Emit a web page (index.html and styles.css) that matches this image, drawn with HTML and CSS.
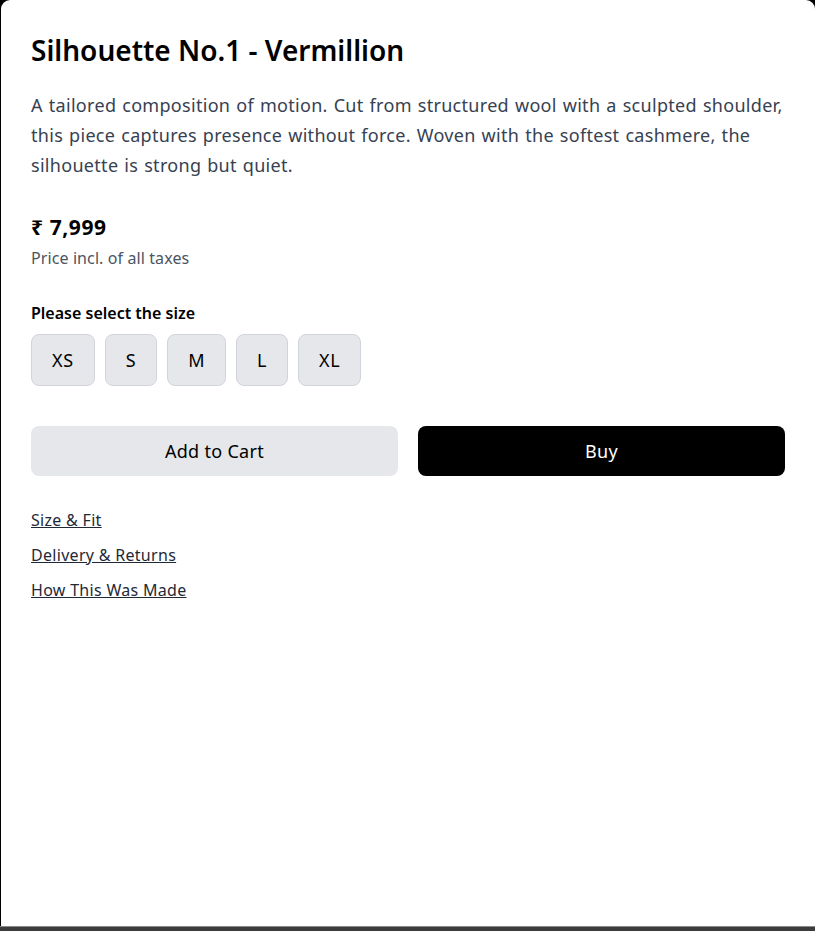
FILE: index.html
```html
<!DOCTYPE html>
<html lang="en">
<head>
<meta charset="utf-8">
<title>Silhouette No.1 - Vermillion</title>
<link rel="stylesheet" href="styles.css">
</head>
<body>
<div class="screen">
  <main class="panel">
    <h1 class="title">Silhouette No.1 - Vermillion</h1>
    <p class="desc">A tailored composition of motion. Cut from structured wool with a sculpted shoulder, this piece captures presence without force. Woven with the softest cashmere, the silhouette is strong but quiet.</p>
    <div class="price">₹ 7,999</div>
    <div class="tax">Price incl. of all taxes</div>
    <div class="size-label">Please select the size</div>
    <div class="sizes">
      <button class="size">XS</button>
      <button class="size">S</button>
      <button class="size">M</button>
      <button class="size">L</button>
      <button class="size">XL</button>
    </div>
    <div class="actions">
      <button class="btn btn-cart">Add to Cart</button>
      <button class="btn btn-buy">Buy</button>
    </div>
    <nav class="links">
      <a href="#" class="link">Size &amp; Fit</a>
      <a href="#" class="link">Delivery &amp; Returns</a>
      <a href="#" class="link">How This Was Made</a>
    </nav>
  </main>
  <div class="bottom-bar"></div>
</div>
</body>
</html>
```
FILE: styles.css
```css
* { box-sizing: border-box; }
html, body { margin: 0; padding: 0; height: 100%; }
body {
  background: #000;
  font-family: "Noto Sans", "Open Sans", sans-serif;
  color: #000;
}
.screen {
  height: 931px;
  display: flex;
  flex-direction: column;
}
.panel {
  flex: 1;
  margin-left: 1px;
  background: #fff;
  border-radius: 9px 9px 0 0;
  padding: 30px 30px 0 30px;
}
.bottom-bar {
  height: 5px;
  background: #3c3c3c;
  border-top: 1px solid #8a8a8a;
}
.title {
  margin: 0;
  font-size: 28px;
  line-height: 40px;
  font-weight: 600;
}
.desc {
  margin: 20px 0 0;
  font-size: 18px;
  line-height: 30px;
  letter-spacing: 0.3px;
  word-spacing: 1px;
  color: #374151;
}
.price {
  margin-top: 33px;
  font-size: 21px;
  line-height: 28px;
  font-weight: 700;
  letter-spacing: 0.6px;
}
.tax {
  margin-top: 5px;
  font-size: 16px;
  line-height: 24px;
  letter-spacing: 0.1px;
  color: #4b5563;
}
.size-label {
  margin-top: 31px;
  font-size: 16px;
  line-height: 24px;
  font-weight: 600;
}
.sizes {
  margin-top: 9px;
  display: flex;
  gap: 10px;
}
.size {
  font-family: inherit;
  height: 52px;
  padding: 0 20px;
  font-size: 18px;
  letter-spacing: 0.6px;
  color: #000;
  background: #e5e7eb;
  border: 1px solid #d1d5db;
  border-radius: 8px;
}
.actions {
  margin-top: 40px;
  display: grid;
  grid-template-columns: 1fr 1fr;
  gap: 20px;
}
.btn {
  font-family: inherit;
  height: 50px;
  font-size: 18px;
  letter-spacing: 0.3px;
  border: none;
  border-radius: 8px;
}
.btn-cart { background: #e5e7eb; color: #000; }
.btn-buy { background: #000; color: #fff; }
.links {
  margin-top: 32px;
  display: flex;
  flex-direction: column;
  align-items: flex-start;
  gap: 11px;
}
.link {
  font-size: 16px;
  line-height: 24px;
  letter-spacing: 0.3px;
  color: #1f2937;
  text-decoration: underline;
}
```
